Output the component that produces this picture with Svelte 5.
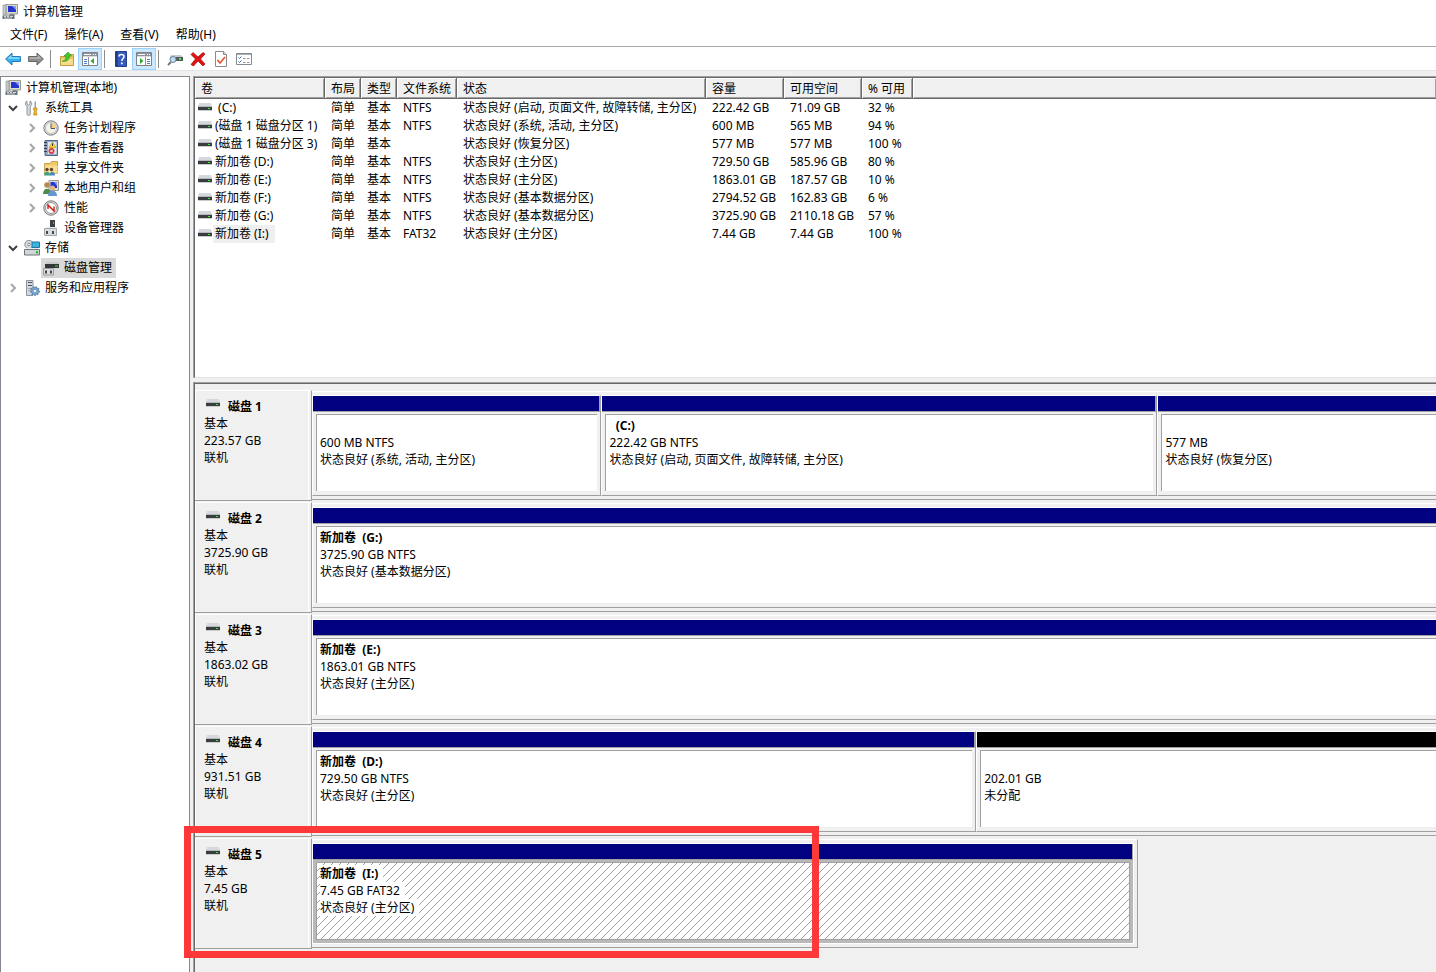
<script>
	const menus = ['文件(F)', '操作(A)', '查看(V)', '帮助(H)']

	const tools = [
		[{ icon: 'back', label: '后退' }, { icon: 'forward', label: '前进' }],
		[{ icon: 'up', label: '上移一级' }, { icon: 'tree', label: '显示/隐藏控制台树', on: true }],
		[{ icon: 'help', label: '帮助' }, { icon: 'actions', label: '显示/隐藏操作窗格', on: true }],
		[
			{ icon: 'scan', label: '重新扫描' },
			{ icon: 'delete', label: '删除' },
			{ icon: 'check', label: '属性' },
			{ icon: 'list', label: '设置' }
		]
	]

	const tree = [
		{ level: 0, icon: 'computer', text: '计算机管理(本地)' },
		{ level: 1, icon: 'tools', text: '系统工具', open: true },
		{ level: 2, icon: 'clock', text: '任务计划程序', open: false },
		{ level: 2, icon: 'events', text: '事件查看器', open: false },
		{ level: 2, icon: 'share', text: '共享文件夹', open: false },
		{ level: 2, icon: 'users', text: '本地用户和组', open: false },
		{ level: 2, icon: 'perf', text: '性能', open: false },
		{ level: 2, icon: 'device', text: '设备管理器' },
		{ level: 1, icon: 'storage', text: '存储', open: true },
		{ level: 2, icon: 'diskmgmt', text: '磁盘管理' },
		{ level: 1, icon: 'services', text: '服务和应用程序', open: false }
	]

	const columns = ['卷', '布局', '类型', '文件系统', '状态', '容量', '可用空间', '% 可用']
	const volumes = [
		[' (C:)', '简单', '基本', 'NTFS', '状态良好 (启动, 页面文件, 故障转储, 主分区)', '222.42 GB', '71.09 GB', '32 %'],
		['(磁盘 1 磁盘分区 1)', '简单', '基本', 'NTFS', '状态良好 (系统, 活动, 主分区)', '600 MB', '565 MB', '94 %'],
		['(磁盘 1 磁盘分区 3)', '简单', '基本', '', '状态良好 (恢复分区)', '577 MB', '577 MB', '100 %'],
		['新加卷 (D:)', '简单', '基本', 'NTFS', '状态良好 (主分区)', '729.50 GB', '585.96 GB', '80 %'],
		['新加卷 (E:)', '简单', '基本', 'NTFS', '状态良好 (主分区)', '1863.01 GB', '187.57 GB', '10 %'],
		['新加卷 (F:)', '简单', '基本', 'NTFS', '状态良好 (基本数据分区)', '2794.52 GB', '162.83 GB', '6 %'],
		['新加卷 (G:)', '简单', '基本', 'NTFS', '状态良好 (基本数据分区)', '3725.90 GB', '2110.18 GB', '57 %'],
		['新加卷 (I:)', '简单', '基本', 'FAT32', '状态良好 (主分区)', '7.44 GB', '7.44 GB', '100 %']
	]

	const disks = [
		{
			name: '磁盘 1', size: '223.57 GB', parts: [
				{ share: 289, name: '', size: '600 MB NTFS', status: '状态良好 (系统, 活动, 主分区)' },
				{ share: 557, name: '  (C:)', size: '222.42 GB NTFS', status: '状态良好 (启动, 页面文件, 故障转储, 主分区)' },
				{ share: 279, name: '', size: '577 MB', status: '状态良好 (恢复分区)' }
			]
		},
		{ name: '磁盘 2', size: '3725.90 GB', parts: [{ share: 1, name: '新加卷  (G:)', size: '3725.90 GB NTFS', status: '状态良好 (基本数据分区)' }] },
		{ name: '磁盘 3', size: '1863.02 GB', parts: [{ share: 1, name: '新加卷  (E:)', size: '1863.01 GB NTFS', status: '状态良好 (主分区)' }] },
		{
			name: '磁盘 4', size: '931.51 GB', parts: [
				{ share: 664, name: '新加卷  (D:)', size: '729.50 GB NTFS', status: '状态良好 (主分区)' },
				{ share: 460, name: '', size: '202.01 GB', status: '未分配', free: true }
			]
		},
		{ name: '磁盘 5', size: '7.45 GB', width: 73.5, marked: true, parts: [{ share: 1, name: '新加卷  (I:)', size: '7.45 GB FAT32', status: '状态良好 (主分区)' }] }
	]

	let selectedNode = $state('磁盘管理')
	let selectedVolume = $state(7)
	let selectedDisk = $state('磁盘 5')
</script>

{#snippet driveIcon()}
	<svg class="drive" width="14" height="8" viewBox="0 0 14 8" aria-hidden="true">
		<path d="M1 0h12l1 4H0z" fill="#d5d8dc" />
		<path d="M0 3h14v1H0z" fill="#b4b8bc" />
		<path d="M0 4h14v3H0z" fill="#3a3d40" />
		<path d="M0 7h14v1H0z" fill="#c9cccf" />
		<path d="M10 5h2v1h-2z" fill="#2df52d" />
	</svg>
{/snippet}

{#snippet icon(name)}
	<svg class="icon" width="16" height="16" viewBox="0 0 16 16" aria-hidden="true">
		{#if name === 'back'}
			<path d="M.6 8 7 2v3.500h8.400v5H7V14z" fill="#35b1ec" stroke="#2379b5" />
			<path d="M2.500 7.700 6.300 4v2.300h8.200v1.400z" fill="#8bdcff" />
		{:else if name === 'forward'}
			<path d="M15.400 8 9 2v3.500H.6v5H9V14z" fill="#8e8e8e" stroke="#646464" />
			<path d="M13.500 7.700 9.700 4v2.300H1.500v1.400z" fill="#b5b5b5" />
		{:else if name === 'up'}
			<path d="M1.500 5.500h5l1-2h7v11h-13z" fill="#eac65f" stroke="#c29c45" />
			<path d="M2 8h12v6H2z" fill="#f7dc8a" />
			<path d="M3 10c3 0 4-2 4-5H5l4-4 3.500 4h-2c0 4-3 6-7.500 5z" fill="#44c832" stroke="#2c8f20" stroke-width=".6" />
		{:else if name === 'tree' || name === 'actions'}
			<path d="M.5 1.500h15v13H.5z" fill="#fff" stroke="#7d838c" />
			<path d="M1 2h14v3H1z" fill="#8c929b" />
			<path d="M2 3.500h7M11 3.500h1M13 3.500h1" stroke="#fff" />
			<path d="M1 5.500h14" stroke="#d7dade" />
			{#if name === 'tree'}
				<path d="M6.500 6v8" stroke="#8c929b" />
				<path d="M2 8.500h3M2 10.500h3M2 12.500h3" stroke="#4a7fc0" />
				<path d="M12 7v6L8.500 10z" fill="#32a832" />
			{:else}
				<path d="M9.500 6v8" stroke="#8c929b" />
				<path d="M11 8.500h3M11 10.500h3M11 12.500h3" stroke="#4a7fc0" />
				<path d="M4 7v6l3.500-3z" fill="#32a832" />
			{/if}
		{:else if name === 'help'}
			<path d="M2.500.5h11v15h-11z" fill="#3559bd" stroke="#233f8e" />
			<path d="M3 1h1.500v14H3z" fill="#1f3a85" />
			<path d="M6 5.500C6 2.800 11 2.800 11 5.500 11 7.500 8.800 7.500 8.800 10" fill="none" stroke="#fff" stroke-width="1.500" />
			<path d="M8 11.500h1.700v1.700H8z" fill="#fff" />
		{:else if name === 'scan'}
			<path d="M4 4h10l2 2H3z" fill="#c7cbcf" />
			<path d="M3 6h13v4H3z" fill="#54595d" />
			<path d="M12 7h2v2h-2z" fill="#3cf03c" />
			<path d="m1 14 3-3" stroke="#777" stroke-width="2" />
			<circle cx="6" cy="8.500" r="3" fill="#bcdcf3" stroke="#718797" />
		{:else if name === 'delete'}
			<path d="M1 3.500 3 1.500 8 6l5-4.500 2 1.500-4.500 5 4.500 5-2 2-5-5-4.500 5L1 13.500 5.500 8z" fill="#de1313" stroke="#a80808" stroke-width=".7" />
		{:else if name === 'check'}
			<path d="M2.500.5h8l3 3v12h-11z" fill="#fff" stroke="#8a8a8a" />
			<path d="M10.500.5v3h3" fill="#ddd" stroke="#8a8a8a" />
			<path d="m4.500 9 2.500 3 5-6" fill="none" stroke="#e0552b" stroke-width="1.600" />
		{:else if name === 'list'}
			<path d="M.5 2.500h15v11H.5z" fill="#fff" stroke="#828a92" />
			<path d="M1 3h14v1H1z" fill="#aab0b6" />
			<path d="m2.500 6.500 1 1 2-2M2.500 10.500l1 1 2-2" fill="none" stroke="#2f74bc" />
			<path d="M7 7.500h2.500M11 7.500h2.500M7 11.500h2.500M11 11.500h2.500" stroke="#90979e" />
		{:else if name === 'computer'}
			<path d="M4 .5h11.500V10H4z" fill="#dedbd1" stroke="#9b9a90" />
			<path d="M6 2h8v6H6z" fill="#2436cc" />
			<path d="M10 2h4v4z" fill="#869af7" />
			<path d="M1 1h3v10H1z" fill="#c3c8cc" stroke="#85898c" stroke-width=".6" />
			<path d="M8 10h4l1 2H7z" fill="#85898c" />
			<path d="M.5 11.500h12V15H.5z" fill="#667078" />
			<path d="M2 12.500h2M5 12.500h2M8 12.500h3M2 14h8" stroke="#d0d6da" />
		{:else if name === 'tools'}
			<path d="M3 1v3l1.500 1L6 4V1c2 1 2.500 4 .3 5.500V14c0 2-3.300 2-3.300 0V6.500C.8 5 1 2 3 1z" fill="#d7dadd" stroke="#7c8287" stroke-width=".8" />
			<path d="M10.500 1.500h1.500V8h-1.500z" fill="#9aa0a5" />
			<path d="M9.500 8h3.500v2l-1 1 1 4H9.500l1-4-1-1z" fill="#f0b91d" stroke="#bb8510" stroke-width=".7" />
		{:else if name === 'clock'}
			<circle cx="8" cy="8" r="7.200" fill="#d4d6d8" stroke="#7e8286" />
			<circle cx="8" cy="8" r="5.500" fill="#f7f3e7" stroke="#a9acae" stroke-width=".6" />
			<path d="M8 8V2.500A5.500 5.500 0 0 1 13.500 8z" fill="#f3d18c" />
			<path d="M8 3.500V8.500h4" fill="none" stroke="#3f5871" />
		{:else if name === 'events'}
			<path d="M2 .5h12.500v15H2z" fill="#93aac8" stroke="#53698c" />
			<path d="M5 2h8.500v12H5z" fill="#dce6f2" />
			<path d="M1 2.500h3M1 5.500h3M1 8.500h3M1 11.500h3" stroke="#343f50" />
			<path d="m9.500 2 3.500 5.500H6z" fill="#ffd220" stroke="#bf8f00" stroke-width=".6" />
			<path d="M9.500 3.500V6" stroke="#333" />
			<circle cx="8.500" cy="11" r="3" fill="#d83a36" />
			<path d="m7.300 9.800 2.400 2.400m0-2.400-2.400 2.400" stroke="#fff" />
		{:else if name === 'share'}
			<path d="M1.500 3.500H7l1.500-2h6v12h-13z" fill="#efc965" stroke="#c9a355" />
			<path d="M2 5.500h12.500v8H2z" fill="#f8dd90" />
			<circle cx="4" cy="9.500" r="1.700" fill="#594430" />
			<circle cx="8.500" cy="9.500" r="1.700" fill="#594430" />
			<path d="M1 15.500c0-5 6-5 6 0z" fill="#3d9e83" />
			<path d="M6.500 15.500c0-5 5.500-5 5.500 0z" fill="#4788c3" />
		{:else if name === 'users'}
			<path d="M6 .5h9.500v10H6z" fill="#e1dfd4" stroke="#9b9a90" />
			<path d="M7.500 2H14v6H7.500z" fill="#2436cc" />
			<path d="M11 2h3v4z" fill="#869af7" />
			<circle cx="4" cy="5" r="2.800" fill="#b78a53" />
			<circle cx="9.500" cy="8" r="2.500" fill="#e0b683" />
			<path d="M0 14c0-7 8-7 8 0z" fill="#508b4d" />
			<path d="M5 16c0-7 9-7 9 0z" fill="#6497d2" />
		{:else if name === 'perf'}
			<circle cx="8" cy="8" r="7.200" fill="#e7e7e7" stroke="#737373" />
			<circle cx="8" cy="8" r="5.500" fill="#fff" stroke="#949494" />
			<path d="M5 9V5l6 6V6.500" fill="none" stroke="#d11a1a" stroke-width="1.400" />
		{:else if name === 'device'}
			<path d="M7 0h5v8H7z" fill="#3c4042" />
			<path d="M10 2h1v2h-1z" fill="#2edb2e" />
			<path d="M4 7h9l1 2H2z" fill="#e6e8ea" />
			<path d="M1.500 8.500h12v7h-12z" fill="#dadde0" stroke="#a2a7ab" />
			<path d="M3 11h2v3H3zM9 11h2v3H9z" fill="#43484c" />
		{:else if name === 'storage'}
			<circle cx="5" cy="4.500" r="4.200" fill="#d6d9dc" stroke="#8a8e92" />
			<circle cx="5" cy="4.500" r="1.300" fill="#fff" stroke="#8a8e92" />
			<path d="M8 2h7.500v5.500H8z" fill="#36b3df" stroke="#2176a0" />
			<path d="M2 8h12l1.500 2H.5z" fill="#eceeef" />
			<path d="M.5 9.500h15v5.500H.5z" fill="#d3d6d9" stroke="#6f7479" />
			<path d="M12 11h2v2.500h-2z" fill="#27c427" />
		{:else if name === 'diskmgmt'}
			<path d="M4 2h11l1 2H2z" fill="#c5c8cb" />
			<path d="M2 4h14v4H2z" fill="#33373a" />
			<path d="M12 5.500h3v1h-3z" fill="#2bf02b" />
			<path d="M.5 8.500h10V15H.5z" fill="#dadde0" stroke="#999ea2" />
			<path d="M2 10.500h2v3H2zM7 10.500h2v3H7z" fill="#43484c" />
		{:else if name === 'services'}
			<path d="M2.500.5H9v15H2.500z" fill="#d3d9de" stroke="#8b949c" />
			<path d="M4 2.500h4M4 5.500h4" stroke="#48545e" />
			<path d="M4 8.500h3M4 10.500h3" stroke="#9ca7b0" />
			<circle cx="11" cy="11" r="4" fill="#7da8d3" stroke="#5682b0" stroke-dasharray="1.500 1.200" stroke-width="1.800" />
			<circle cx="11" cy="11" r="1.600" fill="#fff" stroke="#5682b0" stroke-width=".6" />
		{/if}
	</svg>
{/snippet}

<div class="window">
	<header class="title">
		{@render icon('computer')}
		<span>计算机管理</span>
	</header>
	<nav class="menu">
		{#each menus as menu}
			<button type="button">{menu}</button>
		{/each}
	</nav>
	<div class="toolbar">
		{#each tools as group}
			<div class="group">
				{#each group as tool}
					<button type="button" class:on={tool.on} aria-label={tool.label}>{@render icon(tool.icon)}</button>
				{/each}
			</div>
		{/each}
	</div>

	<div class="content">
		<ul class="tree">
			{#each tree as node}
				<li class="level{node.level}">
					{#if node.open !== undefined}
						<button type="button" class="toggle" class:open={node.open} aria-label={node.text}>
							<svg width="10" height="10" viewBox="0 0 10 10"><path d="m3 1 4 4-4 4" /></svg>
						</button>
					{:else if node.level}
						<span class="toggle"></span>
					{/if}
					<button type="button" class="node" class:selected={selectedNode === node.text} onclick={() => (selectedNode = node.text)}>
						{@render icon(node.icon)}
						<span>{node.text}</span>
					</button>
				</li>
			{/each}
		</ul>

		<main>
			<section class="volumes">
				<table>
					<colgroup>
						<col class="c-name" /><col class="c-short" /><col class="c-short" /><col class="c-fs" />
						<col class="c-status" /><col class="c-size" /><col class="c-size" /><col class="c-pct" /><col />
					</colgroup>
					<thead>
						<tr>
							{#each columns as column}
								<th>{column}</th>
							{/each}
							<th class="rest"></th>
						</tr>
					</thead>
					<tbody>
						{#each volumes as volume, i}
							<tr onclick={() => (selectedVolume = i)}>
								{#each volume as value, j}
									{#if j === 0}
										<td class="name" class:selected={selectedVolume === i}>
											<div>{@render driveIcon()}<span>{value}</span></div>
										</td>
									{:else}
										<td>{value}</td>
									{/if}
								{/each}
								<td></td>
							</tr>
						{/each}
					</tbody>
				</table>
			</section>

			<section class="disks">
				{#each disks as disk}
					<div class="disk">
						<div class="label">
							<h3>{@render driveIcon()}<span>{disk.name}</span></h3>
							<p>基本</p>
							<p>{disk.size}</p>
							<p>联机</p>
						</div>
						<div class="track">
							<div class="parts" class:short={disk.width} style:width="{disk.width ?? 100}%">
								{#each disk.parts as part}
									<div class="part" class:free={part.free} class:selected={selectedDisk === disk.name} style:flex-grow={part.share}>
										<div class="bar"></div>
										<div class="body">
											<div class="info">
												<strong>{part.name}</strong>
												<span>{part.size}</span>
												<span>{part.status}</span>
											</div>
										</div>
									</div>
								{/each}
							</div>
						</div>
						{#if disk.marked}
							<div class="marker"></div>
						{/if}
					</div>
				{/each}
			</section>
		</main>
	</div>
</div>

<style>
	:global(body) {
		margin: 0;
		background: #f0f0f0;
	}
	.window {
		display: flex;
		flex-direction: column;
		height: 100vh;
		overflow: hidden;
		background: #f0f0f0;
		color: #000;
		font: 12px/18px "Noto Sans", "Noto Sans CJK SC", sans-serif;
	}
	button {
		margin: 0;
		padding: 0;
		border: 0;
		background: none;
		color: inherit;
		font: inherit;
	}
	svg {
		display: block;
		flex: none;
	}
	.title {
		display: flex;
		align-items: center;
		gap: 5px;
		height: 23px;
		padding-left: 2px;
		background: #fff;
	}
	.menu {
		display: flex;
		gap: 17px;
		height: 23px;
		padding-left: 10px;
		background: #fff;
		border-bottom: 1px solid #a8a8a8;
	}
	.toolbar {
		display: flex;
		align-items: center;
		height: 22px;
		padding: 1px 0 0 1px;
		background: #fff;
		border-bottom: 1px solid #e3e3e3;
	}
	.group {
		display: flex;
		align-items: center;
		height: 22px;
	}
	.group + .group::before {
		content: "";
		width: 1px;
		height: 18px;
		margin: 0 4px 0 3px;
		background: #8d8d8d;
	}
	.group + .group ~ .group::before {
		margin-left: 2px;
	}
	.group button {
		display: grid;
		place-items: center;
		box-sizing: border-box;
		width: 23px;
		height: 22px;
		border: 1px solid transparent;
	}
	.group button.on {
		width: 24px;
		background: #cce8ff;
		border-color: #99d1ff;
	}

	.content {
		display: grid;
		grid-template-columns: 190px minmax(0, 1fr);
		gap: 4px;
		flex: 1;
		min-height: 0;
		padding-top: 5px;
	}
	.tree {
		margin: 0;
		padding: 1px 0 0;
		border: 1px solid #828790;
		border-bottom: 0;
		background: #fff;
		list-style: none;
	}
	.tree li {
		display: flex;
		align-items: center;
		height: 20px;
		padding-left: 2px;
	}
	.tree .level1 {
		padding-left: 5px;
	}
	.tree .level2 {
		padding-left: 24px;
	}
	.toggle {
		display: grid;
		place-items: center;
		width: 14px;
		margin-right: 2px;
	}
	.toggle path {
		fill: none;
		stroke: #a6a6a6;
		stroke-width: 2;
	}
	.toggle.open svg {
		transform: rotate(90deg);
	}
	.toggle.open path {
		stroke: #404040;
	}
	.node {
		display: flex;
		align-items: center;
		gap: 5px;
		height: 20px;
		padding: 0 4px 0 2px;
	}
	.node.selected {
		background: #d9d9d9;
	}

	main {
		display: flex;
		flex-direction: column;
		gap: 4px;
		min-width: 0;
	}
	.volumes,
	.disks {
		border-top: 1px solid #a0a0a0;
		border-left: 1px solid #696969;
		box-shadow: inset 0 1px #696969, -1px 0 #a0a0a0;
		padding-top: 1px;
	}
	.volumes {
		flex: 0 0 299px;
		background: #fff;
		border-bottom: 1px solid #e3e3e3;
		overflow: hidden;
	}
	table {
		width: 100%;
		table-layout: fixed;
		border-collapse: separate;
		border-spacing: 0;
	}
	.c-name {
		width: 130px;
	}
	.c-short {
		width: 36px;
	}
	.c-fs {
		width: 60px;
	}
	.c-status {
		width: 249px;
	}
	.c-size {
		width: 78px;
	}
	.c-pct {
		width: 51px;
	}
	th {
		height: 18px;
		padding: 2px 0 0 6px;
		border: solid #696969;
		border-width: 0 1px 1px 0;
		background: #f0f0f0;
		box-shadow: inset 1px 1px #fff, inset -1px -1px #a0a0a0;
		font-weight: 400;
		text-align: left;
		white-space: nowrap;
	}
	th.rest {
		border-right: 0;
	}
	td {
		height: 18px;
		padding: 0 0 0 6px;
		white-space: pre;
	}
	td.name {
		padding-left: 3px;
	}
	.name div {
		display: flex;
		align-items: center;
		gap: 1px;
	}
	.name .drive {
		margin-bottom: 2px;
	}
	.name span {
		padding: 0 2px;
	}
	.name.selected span {
		padding-right: 6px;
		background: #efefef;
	}

	.disks {
		flex: 1;
		padding-top: 7px;
	}
	.disk {
		display: flex;
		position: relative;
		margin-bottom: 1px;
	}
	.label {
		box-sizing: border-box;
		width: 117px;
		padding: 7px 0 0 9px;
		border: solid #a0a0a0;
		border-width: 0 1px 1px 0;
		border-top: 1px solid #fff;
		box-shadow: inset 1px 0 #fff, inset -2px 0 #f0f0f0, inset -3px 0 #fff;
		line-height: 17px;
	}
	.label h3 {
		display: flex;
		gap: 8px;
		margin: 0;
		padding-left: 2px;
		font-size: 12px;
	}
	.label .drive {
		margin-top: 1px;
	}
	.label p {
		margin: 0;
	}
	.track {
		flex: 1;
		min-width: 0;
		padding: 1px 0;
	}
	.parts {
		display: flex;
		box-sizing: border-box;
		padding: 3px 0;
		border-top: 1px solid #fff;
		border-bottom: 1px solid #a0a0a0;
	}
	.parts.short {
		padding-right: 3px;
		border-right: 1px solid #a0a0a0;
	}
	.part {
		flex: 1 1 0;
		box-sizing: border-box;
		min-width: 0;
		border: 1px solid #a0a0a0;
		border-top-color: #fff;
		border-left-color: #fff;
	}
	.part:last-child {
		border-right: 0;
	}
	.bar {
		height: 15px;
		background: #000080;
		border-bottom: 1px solid #a0a0a0;
	}
	.part:not(:last-child) .bar {
		border-right: 1px solid #a0a0a0;
	}
	.free .bar {
		background: #000;
	}
	.body {
		padding: 2px 3px 4px;
	}
	.part:last-child .body {
		padding-right: 0;
	}
	.info {
		box-sizing: border-box;
		min-height: 77px;
		padding: 2px 3px;
		border: solid #a0a0a0;
		border-width: 1px 0 0 1px;
		background: #fff;
		line-height: 17px;
	}
	.info strong,
	.info span {
		display: block;
		width: fit-content;
		min-height: 17px;
		white-space: pre;
	}
	.part.selected {
		border-right: 1px solid #fff;
		border-bottom-color: #fff;
	}
	.part.selected .bar {
		border-right: 1px solid #a0a0a0;
	}
	.part.selected .body {
		padding: 2px 3px 3px;
		background: #b9b9b9;
	}
	.selected .info {
		min-height: 78px;
		border-width: 1px;
		background: #fff url("data:image/svg+xml,%3Csvg xmlns='http://www.w3.org/2000/svg' width='8' height='8' shape-rendering='crispEdges'%3E%3Cpath fill='%23a0a0a0' d='M7 0h1v1H7zM6 1h1v1H6zM5 2h1v1H5zM4 3h1v1H4zM3 4h1v1H3zM2 5h1v1H2zM1 6h1v1H1zM0 7h1v1H0z'/%3E%3C/svg%3E");
	}
	.selected .info strong,
	.selected .info span {
		padding-right: 5px;
		background: #fff;
	}
	/* red frame drawn over the disk that needs attention */
	.marker {
		position: absolute;
		top: -12px;
		left: -11px;
		box-sizing: border-box;
		width: 635px;
		height: 132px;
		border: 7px solid #fd3838;
		pointer-events: none;
	}
</style>
